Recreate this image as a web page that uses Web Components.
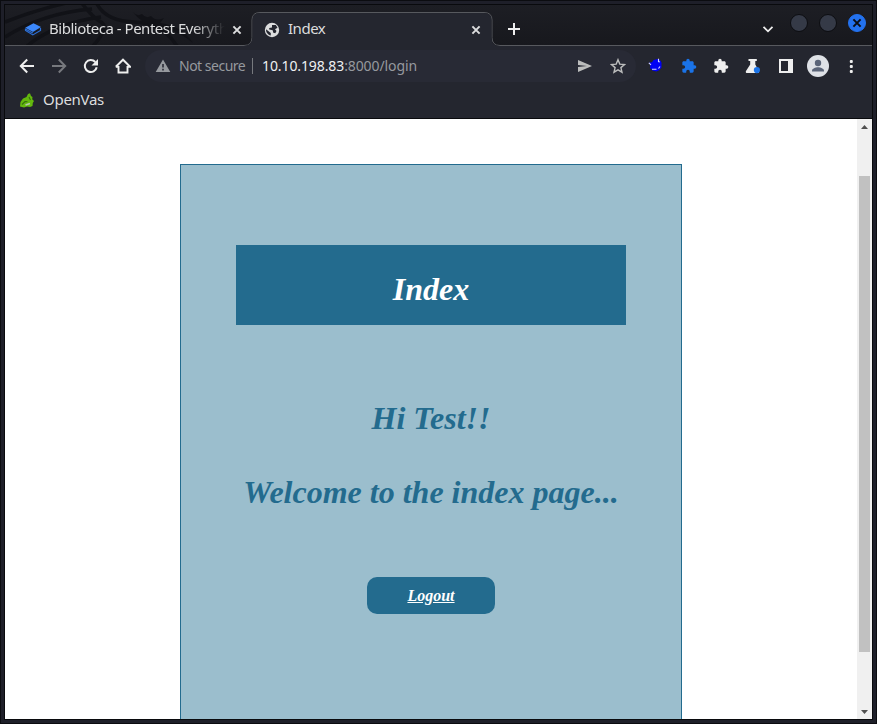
<!DOCTYPE html>
<html lang="en"><head><meta charset="utf-8"><title>Index</title>
<style>html,body{margin:0;height:100%;overflow:hidden;background:#090a0e}</style></head>
<body>
<browser-window>
  <tab-strip slot="tabs"></tab-strip>
  <nav-bar slot="nav"></nav-bar>
  <bookmark-bar slot="bookmarks">OpenVas</bookmark-bar>
  <page-viewport slot="page">
    <index-card>
      <page-title slot="title">Index</page-title>
      <greeting-line>Hi Test!!</greeting-line>
      <greeting-line>Welcome to the index page...</greeting-line>
      <link-button slot="action">Logout</link-button>
    </index-card>
  </page-viewport>
</browser-window>
<script>
const define = (name, html) => customElements.define(name, class extends HTMLElement {
  constructor() { super(); this.attachShadow({mode: 'open'}).innerHTML = html; }
});

const puzzle = '<path d="M20.500 11H19V7c0-1.100-.9-2-2-2h-4V3.500a2.500 2.500 0 0 0-5 0V5H4c-1.100 0-2 .9-2 2v3.800h1.500a2.700 2.700 0 0 1 0 5.400H2V20c0 1.100.9 2 2 2h3.800v-1.500a2.700 2.700 0 0 1 5.400 0V22H17c1.100 0 2-.9 2-2v-4h1.500a2.500 2.500 0 0 0 0-5z"/>';
const icons = {
  back: [16, '<path d="M15 8H2M8.200 1.500 1.800 8l6.400 6.500" fill="none" stroke="currentColor" stroke-width="2"/>'],
  forward: [16, '<path d="M1 8h13M7.800 1.500 14.200 8l-6.400 6.500" fill="none" stroke="currentColor" stroke-width="2"/>'],
  reload: [16, '<path d="M13.700 9.200A6 6 0 1 1 12.300 4" fill="none" stroke="currentColor" stroke-width="2"/><path d="M15 1v6.500H8.500z"/>'],
  home: [16, '<path d="M3.500 8v6.500h9V8M.8 8.800 8 1.700l7.200 7.100H12.500M3.500 8.800H.8" fill="none" stroke="currentColor" stroke-width="1.900"/>'],
  warn: [16, '<path fill-rule="evenodd" d="M8 1.500 15.300 14H.7zM7.200 6v3.500h1.600V6zm0 4.800v1.700h1.600v-1.700z"/>'],
  send: [16, '<path d="M1 2v4.900L10 8l-9 1.100V14l14-6z"/>'],
  star: [16, '<path d="m8 1.700 1.800 4.400 4.700.4-3.600 3.100 1.100 4.600L8 11.800l-4 2.400 1.100-4.600-3.600-3.100 4.700-.4z" fill="none" stroke="currentColor" stroke-width="1.400"/>'],
  shield: [16, '<path d="M1 4.800 4 4.200 5.500 2l4-1 2.500 1 1.500 2.500v5l-2 2.500-3 1.500-4-1L2 10 2.300 6.500z" fill="#0000f5"/><path d="M.8 4.800 3 6.800M10.500.8v2.700l1.300.5M4 11.300h4.500M10.500 10.500l1.500-2" stroke="#d7d9ff" stroke-width="1.100" fill="none"/>'],
  puzzle: [24, puzzle],
  flask: [16, '<path d="M3.500 1h8.300v2h-1.500v3.600l3.500 6.300c.6 1-.1 2.100-1.200 2.100H2.200C1 15 .4 13.900 1 12.900l4.200-6.300V3H3.500z"/><circle cx="11.900" cy="12.100" r="3.100" fill="#1a73e8"/>'],
  panel: [16, '<path fill-rule="evenodd" d="M1 1h14v14H1zm2 2v10h7V3z"/>'],
  menu: [16, '<rect x="6.800" y="2" width="3" height="3" rx="1"/><rect x="6.800" y="7" width="3" height="3" rx="1"/><rect x="6.800" y="12" width="3" height="3" rx="1"/>'],
  avatar: [22, '<circle cx="11" cy="11" r="11" fill="#dee1e6"/><circle cx="11" cy="8" r="3.200" fill="#5a6478"/><path d="M5 16.500v-1c0-2 3.500-3.300 6-3.300s6 1.300 6 3.300v1z" fill="#5a6478"/>'],
  close: [16, '<path d="m4.400 4.400 7.200 7.200m0-7.200-7.200 7.200" stroke="currentColor" stroke-width="2"/>'],
  plus: [16, '<path d="M8 2v12M2 8h12" stroke="currentColor" stroke-width="2"/>'],
  down: [16, '<path d="m3.500 5.800 4.500 4.500 4.500-4.500" fill="none" stroke="currentColor" stroke-width="1.800"/>'],
  library: [18, '<path d="M1.200 6.800 9.500 2.300 17 6 9 11z" fill="#3b87fa"/><path d="M1.500 7.500v2l7.300 4.400L16.500 9.500V7M1.500 8l7.300 4" fill="none" stroke="#2c70d8" stroke-width="1.200"/>'],
  globe: [16, '<circle cx="8" cy="8" r="7.200"/><path d="M2 7.300 6.800 11v2.500C4 13 1.800 10.300 2 7.300zM8 3h3.800l1.700 2.800-2.500 1.500 1.500 1.600-1.200 2.300-2-.5-.6-2.400-3.500-.8V6.100l2.800-.6z" fill="#24262f"/>'],
  dragon: [16, '<path d="M1 14.500 1.500 10 4 6.500 7.500 5 9 2l2-.8 1 2.800 1.500 1-.3 2.200L15 9l-1.200 2-.3 3-2.500 1-3-.6-3 1z" fill="#63b80d"/><path d="m3 12.500 3-3 2.500.3M10 5l1.500 3" fill="none" stroke="#376c12" stroke-width="1.100"/><path d="m6.500 13 4.500-1.500" stroke="#b8c7ac" stroke-width="1.500"/>']
};
customElements.define('ui-icon', class extends HTMLElement {
  constructor() { super(); this.attachShadow({mode: 'open'}); }
  connectedCallback() {
    const [box, body] = icons[this.getAttribute('name')];
    const size = this.getAttribute('size') || (box === 24 ? 16 : box);
    this.shadowRoot.innerHTML = `<style>:host{display:flex;flex:none;align-items:center;justify-content:center}svg{display:block;fill:currentColor}</style><svg width="${size}" height="${size}" viewBox="0 0 ${box} ${box}">${body}</svg>`;
  }
});

define('browser-window', `<style>
:host{display:flex;flex-direction:column;box-sizing:border-box;height:100vh;padding:5px;background:#1e1f29;box-shadow:inset 0 0 0 1px #0b0c10;color:#e8eaed;font-family:"Noto Sans",sans-serif}
.frame{display:flex;flex-direction:column;flex:1;min-height:0;box-shadow:0 0 0 1px #090a0d}
::slotted([slot=page]){flex:1;min-height:0}
</style><div class="frame"><slot name="tabs"></slot><slot name="nav"></slot><slot name="bookmarks"></slot><slot name="page"></slot></div>`);

define('tab-strip', `<style>
:host{display:flex;position:relative;height:41px;flex:none;background:linear-gradient(#1d1e24,#17181d);overflow:hidden}
.art{position:absolute;left:0;top:0}
.row{display:flex;flex:1;position:relative}
.spring{flex:1}
.plus{width:44px;height:32px;padding-top:8px;color:#eee}
.tool{width:32px;height:32px;padding-top:8px;color:#eee}
.controls{display:flex;gap:11px;padding:9px 6px 0 6px}
.dot{box-sizing:border-box;display:flex;align-items:center;justify-content:center;width:18px;height:18px;border-radius:50%;background:#353a47;border:1px solid #0c0d11}
.exit{background:#2372ef;color:#0b0d14;border-color:#2372ef}
</style>
<svg class="art" width="867" height="41"><g fill="none" stroke="#111217" stroke-width="3.500"><path d="M0 17Q38 2 76-5M0 32Q38 8 87 4M22 41Q50 18 96 12M76-3Q87 12 96 17T88 41M92-1q9 17 37 18t43 24"/></g><path d="M128 7q4 5 9 2 4 5 9 2 5 6 13 2l-4 5q22 3 33 20-20-16-38-16-14-4-22-15z" fill="#111217"/><path d="M0 40.500h239q8 0 8-8V15q0-7.500 8-7.500h224q8 0 8 7.500v17.500q0 8 8 8h372" fill="none" stroke="#57595e"/><path d="M239 41q8-1 8.500-8V15q0-7 8-7h223q8 0 8 7v18q0 8 8 8z" fill="#24262f"/></svg>
<div class="row"><browser-tab icon="library" wide>Biblioteca - Pentest Everything</browser-tab><browser-tab icon="globe">Index</browser-tab>
<ui-icon name="plus" class="plus"></ui-icon><span class="spring"></span><ui-icon class="tool" name="down"></ui-icon>
<div class="controls"><span class="dot"></span><span class="dot"></span><span class="dot exit"><ui-icon name="close" size="16"></ui-icon></span></div></div>`);

customElements.define('browser-tab', class extends HTMLElement {
  constructor() { super(); this.attachShadow({mode: 'open'}); }
  connectedCallback() {
    this.shadowRoot.innerHTML = `<style>
:host{display:flex;align-items:center;box-sizing:border-box;width:240px;height:41px;padding:8px 8px 0 12px;font-size:15px;line-height:20px;letter-spacing:-.48px;color:#dcddde}
:host([wide]){width:247px;padding:8px 7px 0 19px}
.label{flex:1;overflow:hidden;white-space:nowrap;margin:-3px 4px 0 8px}
:host([wide]) .label{margin-left:7px;-webkit-mask:linear-gradient(90deg,#000 calc(100% - 32px),transparent)}
</style><ui-icon name="${this.getAttribute('icon')}"></ui-icon><span class="label"><slot></slot></span><ui-icon name="close"></ui-icon>`;
  }
});

define('nav-bar', `<style>
:host{display:flex;align-items:center;flex:none;height:40px;padding-left:6px;background:#24262f;box-sizing:border-box}
.b{width:32px;color:#eee}
.e{width:32.400px}
.dim{color:#77797e}
.blue{color:#1a73e8}
</style><ui-icon class="b" name="back"></ui-icon><ui-icon class="b dim" name="forward"></ui-icon><ui-icon class="b" name="reload"></ui-icon><ui-icon class="b" name="home"></ui-icon><address-field></address-field><ui-icon class="b e" name="shield"></ui-icon><ui-icon class="b e blue" name="puzzle"></ui-icon><ui-icon class="b e" name="puzzle"></ui-icon><ui-icon class="b e" name="flask"></ui-icon><ui-icon class="b e" name="panel"></ui-icon><ui-icon class="b e" name="avatar"></ui-icon><ui-icon class="b e" name="menu"></ui-icon>`);

define('address-field', `<style>
:host{display:flex;align-items:center;box-sizing:border-box;width:491px;height:32px;margin:0 4px 0 6px;padding:0 10px;border-radius:16px;background:#282a35;font-size:14px;line-height:20px;color:#96999e;white-space:nowrap}
.safe{margin-left:8px;width:66px;letter-spacing:-.5px}
.sep{width:1px;height:16px;background:#77797e;margin:0 9px 0 7px}
b{font-weight:400;color:#eef0f2}
.url{flex:1;letter-spacing:-.1px}
.send,.star{color:#bcbdbd}.star{margin-left:17px}.send{margin-right:0}
:host{padding-right:10px}
</style><ui-icon name="warn"></ui-icon><span class="safe">Not secure</span><span class="sep"></span><span class="url"><b>10.10.198.83</b>:8000/login</span><ui-icon class="send" name="send"></ui-icon><ui-icon class="star" name="star"></ui-icon>`);

define('bookmark-bar', `<style>
:host{display:flex;align-items:center;gap:8px;flex:none;box-sizing:border-box;height:33px;padding:0 14px 5px;background:#24262f;border-bottom:1px solid #090a0d;font-size:15px;line-height:20px;letter-spacing:-.28px;color:#dcddde}
span{margin-top:-1px}
</style><ui-icon name="dragon"></ui-icon><span><slot></slot></span>`);

define('page-viewport', `<style>
:host{display:flex;background:#fff;overflow:hidden}
.content{flex:1;display:flex;justify-content:center;align-items:flex-start;padding:45px 0 0;overflow:hidden}
.bar{width:15px;background:#f0f0f0;display:flex;flex-direction:column;align-items:center}
svg{display:block;fill:#505050}
.thumb{width:11px;height:476px;margin-top:42px;background:#c1c1c1}
.space{flex:1}
</style><div class="content"><slot></slot></div><div class="bar"><svg width="15" height="15"><path d="M4 10h7L7.500 6z"/></svg><span class="thumb"></span><span class="space"></span><svg width="15" height="15"><path d="M4 6h7l-3.500 4z"/></svg></div>`);

define('index-card', `<style>
:host{display:flex;flex-direction:column;align-items:center;box-sizing:border-box;width:502px;height:640px;padding-top:80px;border:1px solid #236b8e;background:#9bbecd;color:#236b8e;font:italic bold 32px/37px "Liberation Serif",serif}
.copy{display:flex;flex-direction:column;gap:37px;margin:75px 0 66px;align-items:center}
</style><slot name="title"></slot><div class="copy"><slot></slot></div><slot name="action"></slot>`);
define('page-title', `<style>:host{display:flex;align-items:center;justify-content:center;box-sizing:border-box;width:390px;height:80px;padding-top:8px;background:#236b8e;color:#fff}</style><slot></slot>`);
define('greeting-line', `<style>:host{display:block;white-space:nowrap}</style><slot></slot>`);
define('link-button', `<style>:host{display:flex;align-items:center;justify-content:center;width:128px;height:37px;border-radius:10px;background:#236b8e;color:#fff;font-size:16px;line-height:18px}a{text-decoration:underline}</style><a><slot></slot></a>`);
</script>
</body></html>
